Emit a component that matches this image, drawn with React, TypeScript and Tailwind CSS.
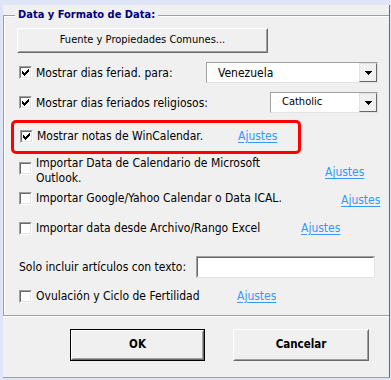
import React from "react";

const FONT = "font-['DejaVu_Sans_Condensed','DejaVu_Sans',sans-serif] [font-stretch:condensed]";

function Check({ checked }: { checked?: boolean }) {
  return (
    <div className="w-[13px] h-[13px] shrink-0 border border-t-[#a0a0a0] border-l-[#a0a0a0] border-b-[#ffffff] border-r-[#ffffff]">
      <div className="w-full h-full bg-white border border-t-[#696969] border-l-[#696969] border-b-[#e3e3e3] border-r-[#e3e3e3] flex items-center justify-center">
        {checked && (
          <svg width="7" height="7" viewBox="0 0 7 7" shapeRendering="crispEdges">
            <rect x="6" y="0" width="1" height="3" fill="#000" />
            <rect x="5" y="1" width="1" height="3" fill="#000" />
            <rect x="4" y="2" width="1" height="3" fill="#000" />
            <rect x="3" y="3" width="1" height="3" fill="#000" />
            <rect x="2" y="4" width="1" height="3" fill="#000" />
            <rect x="1" y="3" width="1" height="3" fill="#000" />
            <rect x="0" y="2" width="1" height="3" fill="#000" />
          </svg>
        )}
      </div>
    </div>
  );
}

function Link() {
  return <span className="text-[#3399ff] underline underline-offset-[2px] leading-[15px]">Ajustes</span>;
}

function Select({ text, width, small }: { text: string; width: string; small?: boolean }) {
  return (
    <div className={`flex h-[21px] ${width} border border-t-[#a0a0a0] border-l-[#a0a0a0] border-b-[#e3e3e3] border-r-[#e3e3e3] bg-white`}>
      <div className={`flex-1 flex items-center ${small ? "pl-[11px] text-[11px]" : "pl-[11px]"} text-black`}>{text}</div>
      <div className="w-[18px] h-full border border-t-[#e3e3e3] border-l-[#e3e3e3] border-b-[#696969] border-r-[#696969] bg-[#f0f0f0] flex items-center justify-center">
        <svg width="7" height="4" viewBox="0 0 7 4" shapeRendering="crispEdges">
          <path d="M0 0 H7 L3.5 4 Z" fill="#000" />
        </svg>
      </div>
    </div>
  );
}

export default function App() {
  return (
    <div className={`w-[391px] h-[380px] bg-[#dfe4f7] pt-[5px] pl-[3px] ${FONT} text-[12px] text-black`}>
      <div className="w-[387px] h-[373px] bg-[#f0f0f0] border-r border-r-[#696969] border-b border-b-[#a0a0a0] flex flex-col">
        {/* Group box */}
        <div className="relative mt-[10px] h-[301px] border-t border-l border-b border-[#a0a0a0] shadow-[inset_1px_1px_0_#ffffff,0_1px_0_#ffffff] flex flex-col">
          <div className="absolute left-[11px] top-[-9px] px-[3px] bg-[#f0f0f0] font-bold text-[11px] text-[#000080] leading-[15px]">
            Data y Formato de Data:
          </div>

          {/* Fuente button */}
          <div className="mt-[12px] ml-[13px] w-[251px] h-[25px] border border-t-[#ffffff] border-l-[#ffffff] border-b-[#696969] border-r-[#696969] bg-[#f0f0f0]">
            <div className="w-full h-full border border-t-[#f0f0f0] border-l-[#f0f0f0] border-b-[#a0a0a0] border-r-[#a0a0a0] flex items-center justify-center text-[11px]">
              Fuente y Propiedades Comunes...
            </div>
          </div>

          {/* Row 1 */}
          <div className="mt-[9px] h-[21px] flex items-center pl-[15px]">
            <Check checked />
            <span className="ml-[4px]">Mostrar dias feriad. para:</span>
            <div className="ml-auto mr-[11px]">
              <Select text="Venezuela" width="w-[172px]" />
            </div>
          </div>

          {/* Row 2 */}
          <div className="mt-[9px] h-[21px] flex items-center pl-[15px]">
            <Check checked />
            <span className="ml-[4px]">Mostrar dias feriados religiosos:</span>
            <div className="ml-auto mr-[11px]">
              <Select text="Catholic" width="w-[108px]" small />
            </div>
          </div>

          {/* Red highlighted row */}
          <div className="mt-[7px] ml-[7px] w-[290px] h-[34px] border-[3px] border-[#ff0000] rounded-[5px] flex items-center pl-[6px] pb-[2px]">
            <Check checked />
            <span className="ml-[4px] w-[201px]">Mostrar notas de WinCalendar.</span>
            <Link />
          </div>

          {/* Row 4 */}
          <div className="mt-[2px] h-[30px] flex items-start pl-[15px]">
            <div className="mt-[6px]"><Check /></div>
            <span className="ml-[4px] w-[289px] leading-[15px]">
              Importar Data de Calendario de Microsoft
              <br />
              Outlook.
            </span>
            <div className="self-center mt-[2px]"><Link /></div>
          </div>

          {/* Row 5 */}
          <div className="mt-[1px] h-[22px] flex items-center pl-[15px]">
            <Check />
            <span className="ml-[4px] w-[305px]">Importar Google/Yahoo Calendar o Data ICAL.</span>
            <div className="mt-[4px]"><Link /></div>
          </div>

          {/* Row 6 */}
          <div className="mt-[8px] h-[22px] flex items-center pl-[15px]">
            <Check />
            <span className="ml-[4px] w-[265px]">Importar data desde Archivo/Rango Excel</span>
            <Link />
          </div>

          {/* Solo row */}
          <div className="mt-[17px] h-[22px] flex items-center pl-[15px]">
            <span className="w-[177px]">Solo incluir artículos con texto:</span>
            <div className="w-[179px] h-[22px] border border-t-[#a0a0a0] border-l-[#a0a0a0] border-b-[#e3e3e3] border-r-[#e3e3e3] bg-white">
              <div className="w-full h-full border border-t-[#696969] border-l-[#696969] border-b-[#ffffff] border-r-[#ffffff]" />
            </div>
          </div>

          {/* Row 7 */}
          <div className="mt-[7px] h-[22px] flex items-center pl-[15px]">
            <Check />
            <span className="ml-[4px] w-[201px]">Ovulación y Ciclo de Fertilidad</span>
            <Link />
          </div>
        </div>

        {/* Buttons */}
        <div className="mt-[13px] ml-[67px] flex gap-[28px] text-[11.5px]">
          <div className="w-[135px] h-[32px] border border-black">
            <div className="w-full h-full border border-t-[#ffffff] border-l-[#ffffff] border-b-[#696969] border-r-[#696969] bg-[#f0f0f0]">
              <div className="w-full h-full border border-t-[#f0f0f0] border-l-[#f0f0f0] border-b-[#a0a0a0] border-r-[#a0a0a0] flex items-center justify-center font-bold">
                OK
              </div>
            </div>
          </div>
          <div className="w-[136px] h-[32px] border border-t-[#ffffff] border-l-[#ffffff] border-b-[#696969] border-r-[#696969] bg-[#f0f0f0]">
            <div className="w-full h-full border border-t-[#f0f0f0] border-l-[#f0f0f0] border-b-[#a0a0a0] border-r-[#a0a0a0] flex items-center justify-center font-bold">
              Cancelar
            </div>
          </div>
        </div>
      </div>
    </div>
  );
}
